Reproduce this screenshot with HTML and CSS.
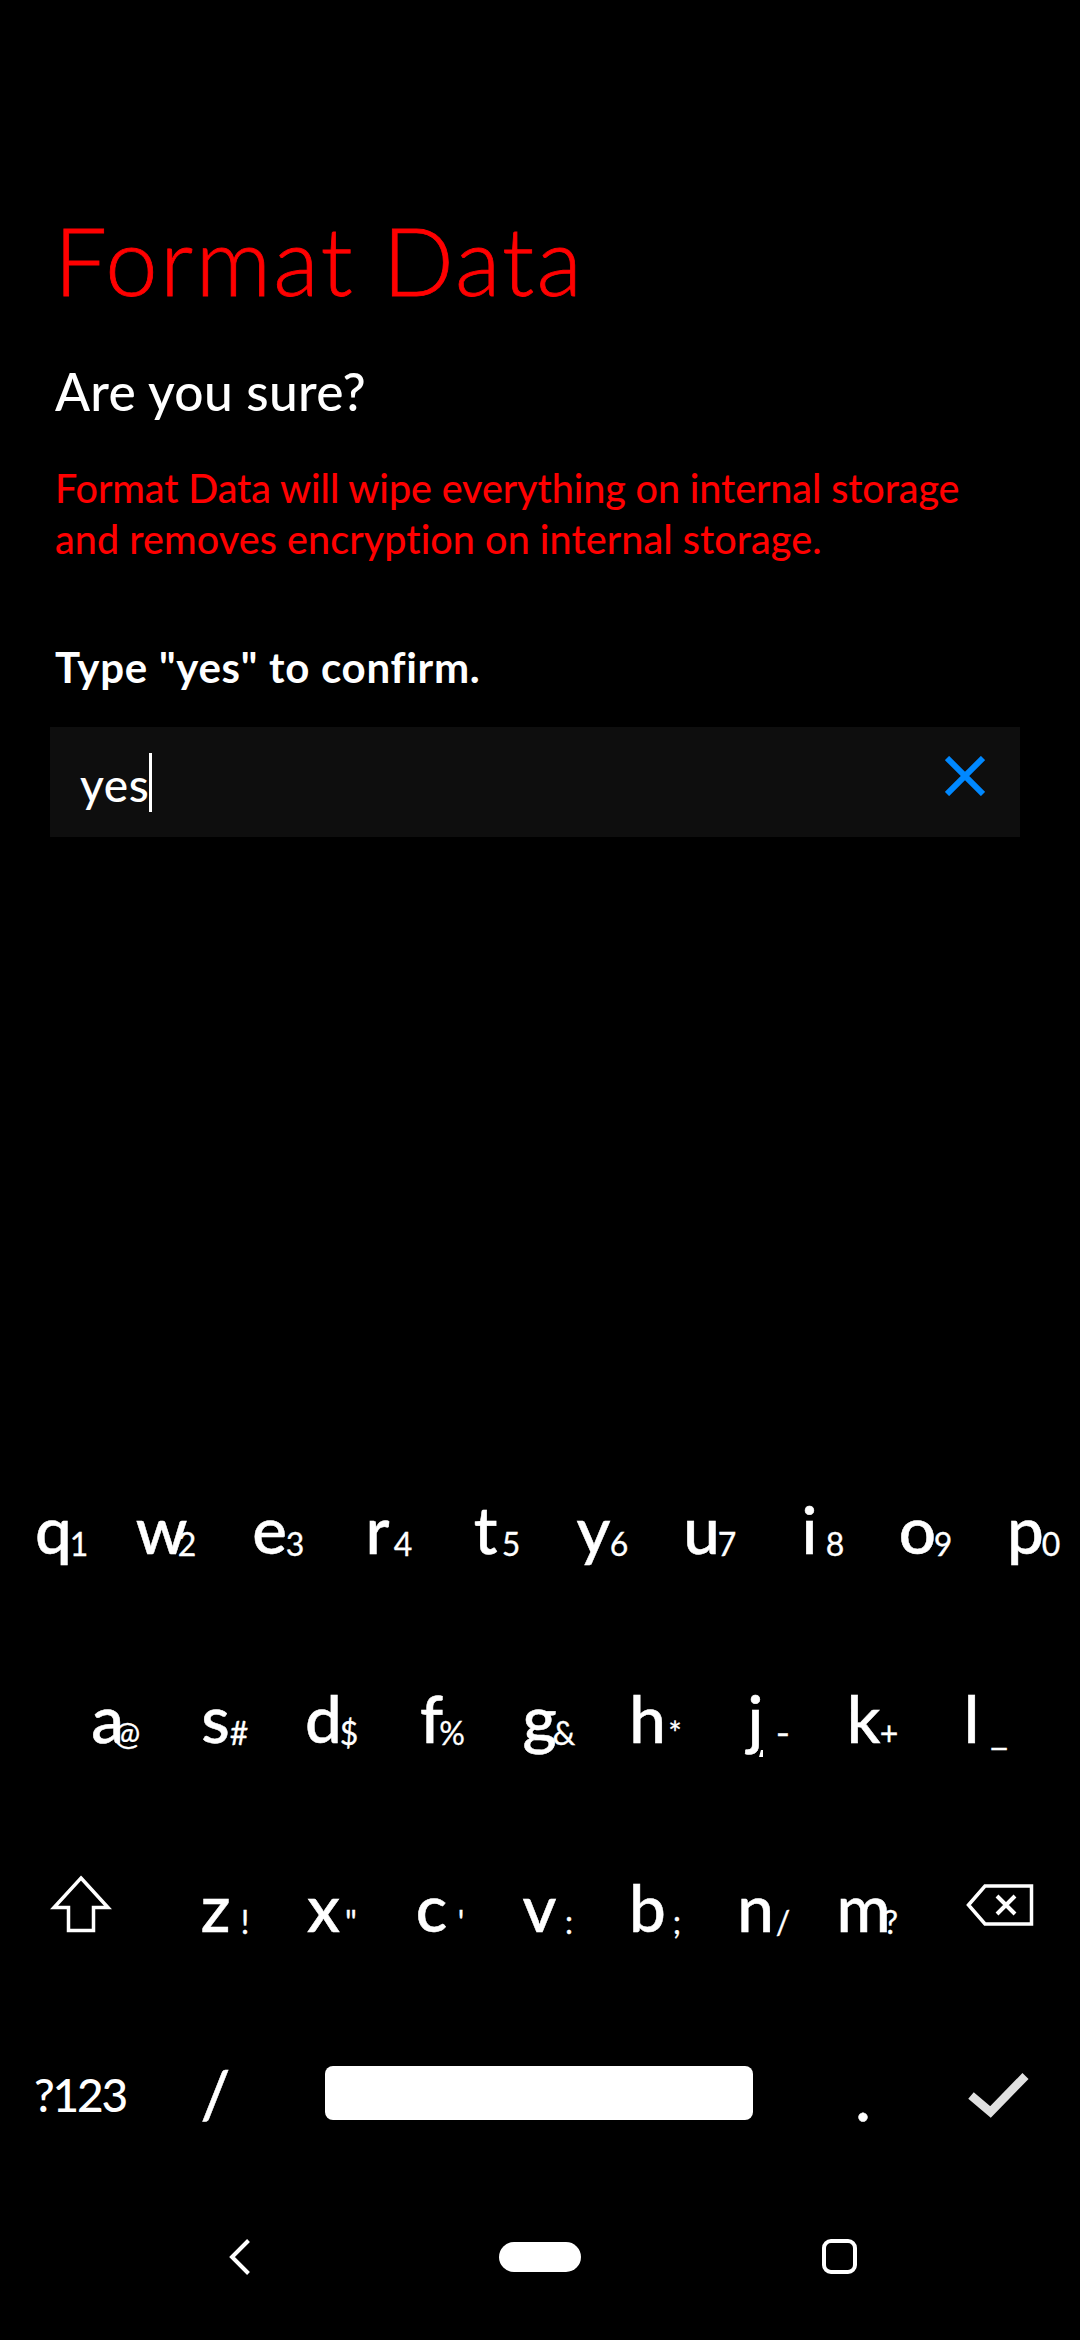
FILE: index.html
```html
<!DOCTYPE html>
<html lang="en">
<head>
<meta charset="utf-8">
<title>Format Data</title>
<link rel="stylesheet" href="styles.css">
</head>
<body>
<main class="page">
  <h1 class="title">Format Data</h1>
  <h2 class="question">Are you sure?</h2>
  <p class="warning"><span class="line-a">Format Data will wipe everything on internal storage</span><br><span class="line-b">and removes encryption on internal storage.</span></p>
  <p class="prompt">Type "yes" to confirm.</p>
  <div class="field">
    <span class="value">yes</span><span class="caret"></span>
    <svg class="clear" width="40" height="40" viewBox="0 0 40 40"><path d="M2 2 38 38M38 2 2 38"/></svg>
  </div>
</main>
<section class="keyboard">
  <div class="row">
    <div class="key">q<sub>1</sub></div><div class="key">w<sub>2</sub></div><div class="key">e<sub>3</sub></div><div class="key">r<sub>4</sub></div><div class="key">t<sub>5</sub></div><div class="key">y<sub>6</sub></div><div class="key">u<sub>7</sub></div><div class="key">i<sub>8</sub></div><div class="key">o<sub>9</sub></div><div class="key">p<sub>0</sub></div>
  </div>
  <div class="row row-home">
    <div class="key">a<sub class="at">@</sub></div><div class="key">s<sub class="hash">#</sub></div><div class="key">d<sub>$</sub></div><div class="key">f<sub class="percent">%</sub></div><div class="key">g<sub class="amp">&amp;</sub></div><div class="key">h<sub class="star">*</sub></div><div class="key">j<sub class="dash">-</sub><svg class="speck" width="4" height="7" viewBox="0 0 4 7"><path d="M2 0H4V7H0Z"/></svg></div><div class="key">k<sub>+</sub></div><div class="key">l<sub class="under">_</sub></div>
  </div>
  <div class="row">
    <div class="wide"><svg class="shift" width="64" height="58" viewBox="0 0 64 58"><path d="M32 3 59 32.5H44.5V55.500H19.500V32.500H5Z"/></svg></div>
    <div class="key">z<sub class="punct">!</sub></div><div class="key">x<sub class="quote">"</sub></div><div class="key">c<sub class="punct">'</sub></div><div class="key">v<sub class="punct">:</sub></div><div class="key">b<sub class="punct">;</sub></div><div class="key">n<sub class="quote">/</sub></div><div class="key">m<sub class="quote">?</sub></div>
    <div class="wide"><svg class="backspace" width="68" height="42" viewBox="0 0 68 42"><path d="M2.500 21 19 2H65.500V40H19Z"/><path d="M31 12 49 30M49 12 31 30"/></svg></div>
  </div>
  <div class="row">
    <div class="wide mode">?123</div>
    <div class="key slash">/</div>
    <div class="space"></div>
    <div class="key dot">.</div>
    <div class="wide"><svg class="enter" width="64" height="48" viewBox="0 0 64 48"><path d="M4 23.500 23.500 40 58.500 4"/></svg></div>
  </div>
</section>
<nav class="nav">
  <svg width="22" height="38" viewBox="0 0 22 38"><path d="M19.500 2.500 3 19 19.500 35.500"/></svg>
  <span class="home"></span>
  <span class="recent"></span>
</nav>
</body>
</html>
```
FILE: styles.css
```css
* { box-sizing: border-box; }
html { background: #000; }
body {
  margin: 0;
  width: 1080px;
  height: 2340px;
  overflow: hidden;
  display: flex;
  flex-direction: column;
  background: #000;
  color: #fff;
  font-family: Lato, "Open Sans", sans-serif;
  font-weight: 500;
  font-variant-ligatures: none;
}
h1, h2, p { margin: 0; white-space: nowrap; }
.page { height: 1432px; padding: 202px 50px 0; }
.title {
  height: 152px;
  padding-left: 4px;
  color: #f00;
  font-size: 94px;
  line-height: 116px;
  font-weight: 300;
  letter-spacing: 2.200px;
  -webkit-text-stroke: 0.800px #f00;
}
.question {
  height: 108px;
  padding-left: 5px;
  font-size: 51.500px;
  line-height: 75px;
  font-weight: 500;
  letter-spacing: 0.300px;
}
.warning {
  height: 180px;
  padding-left: 5px;
  color: #f00;
  font-size: 39.500px;
  line-height: 51px;
}
.line-a { letter-spacing: -0.100px; }
.line-b { letter-spacing: 0.070px; }
.prompt {
  height: 85px;
  padding-left: 5px;
  font-size: 42px;
  line-height: 50px;
  font-weight: 700;
  letter-spacing: 0.720px;
}
.field {
  display: flex;
  align-items: flex-start;
  width: 970px;
  height: 110px;
  padding: 26px 35px 0 30px;
  background: #0e0e0e;
}
.value { width: 69px; font-size: 46px; line-height: 63px; letter-spacing: 0.600px; }
.caret { width: 3px; height: 59px; background: #fff; }
.clear { margin: 3px 0 0 auto; }
.clear path { fill: none; stroke: #08f; stroke-width: 6; }
.keyboard { height: 756px; }
.row { display: flex; height: 189px; }
.row-home { padding-left: 54px; }
.key {
  position: relative;
  width: 108px;
  padding-right: 1px;
  font-size: 65.500px;
  line-height: 193px;
  text-align: center;
  -webkit-text-stroke: 0.500px #fff;
}
.key sub {
  position: absolute;
  top: 93px;
  left: 49px;
  width: 60px;
  font-size: 32px;
  line-height: 38px;
  font-weight: 400;
  vertical-align: baseline;
  -webkit-text-stroke: 0.300px #fff;
}
.key .at { left: 43px; }
.key .hash { left: 47px; }
.key .percent { left: 44px; }
.key .amp { left: 48px; }
.key .star { left: 51px; }
.key .dash { left: 51px; transform: scaleX(1.200); }
.key .under { left: 51px; transform: scaleX(1.200); }
.key .punct { left: 53px; }
.key .quote { left: 51px; }
.speck { position: absolute; left: 57px; top: 129px; fill: #fff; }
.wide { width: 162px; }
.wide path { fill: none; stroke: #fff; stroke-width: 3.500; }
.shift { display: block; margin: 65px 0 0 49px; }
.backspace { display: block; margin: 74px 0 0 48px; }
.backspace path + path { stroke-width: 4; }
.enter { display: block; margin: 73px 0 0 50px; }
.wide .enter path { stroke: #e0e0e0; stroke-width: 8.500; }
.mode { padding-left: 34px; font-size: 46px; line-height: 192px; letter-spacing: -2.200px; }
.slash { line-height: 188px; }
.space { width: 428px; height: 54px; margin: 67px 56px 0 55px; border-radius: 8px; background: #fff; }
.dot { padding-right: 0; }
.nav {
  display: flex;
  align-items: center;
  height: 137px;
  padding-left: 229px;
}
.nav path { fill: none; stroke: #fff; stroke-width: 4; }
.home { width: 82px; height: 30px; margin-left: 248px; border-radius: 15px; background: #fff; }
.recent { width: 35px; height: 35px; margin-left: 241px; border: 4px solid #fff; border-radius: 9px; }
```
